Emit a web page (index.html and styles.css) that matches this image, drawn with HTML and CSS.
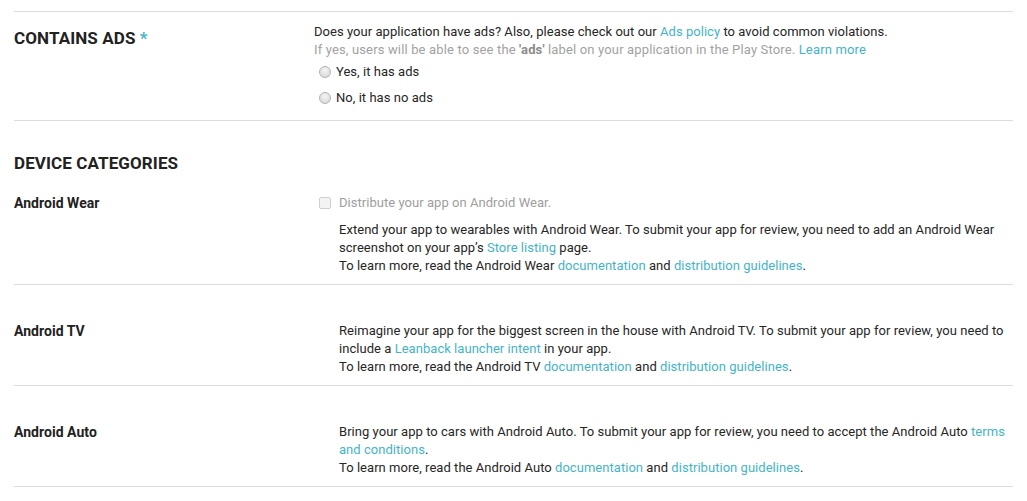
FILE: index.html
```html
<!DOCTYPE html>
<html>
<head>
<meta charset="utf-8">
<link rel="stylesheet" href="styles.css">
</head>
<body>
<div class="page">
  <section class="block ads">
    <div class="left">
      <h2 class="title">CONTAINS ADS <span class="req">*</span></h2>
    </div>
    <div class="right">
      <p class="line">Does your application have ads? Also, please check out our <a class="link">Ads policy</a> to avoid common violations.</p>
      <p class="line hint">If yes, users will be able to see the <b>'ads'</b> label on your application in the Play Store. <a class="link">Learn more</a></p>
      <label class="radio-row"><span class="radio"></span><span>Yes, it has ads</span></label>
      <label class="radio-row"><span class="radio"></span><span>No, it has no ads</span></label>
    </div>
  </section>

  <section class="block devices">
    <h2 class="title cat-title">DEVICE CATEGORIES</h2>
    <div class="device wear">
      <div class="left"><h3 class="dev-name">Android Wear</h3></div>
      <div class="right">
        <label class="check-row"><span class="check"></span><span>Distribute your app on Android Wear.</span></label>
        <div class="desc">
          <p class="line">Extend your app to wearables with Android Wear. To submit your app for review, you need to add an Android Wear screenshot on your app’s <a class="link">Store listing</a> page.</p>
          <p class="line">To learn more, read the Android Wear <a class="link">documentation</a> and <a class="link">distribution guidelines</a>.</p>
        </div>
      </div>
    </div>
  </section>

  <section class="block device plain">
    <div class="left"><h3 class="dev-name">Android TV</h3></div>
    <div class="right">
      <div class="desc">
        <p class="line">Reimagine your app for the biggest screen in the house with Android TV. To submit your app for review, you need to include a <a class="link">Leanback launcher intent</a> in your app.</p>
        <p class="line">To learn more, read the Android TV <a class="link">documentation</a> and <a class="link">distribution guidelines</a>.</p>
      </div>
    </div>
  </section>

  <section class="block device plain">
    <div class="left"><h3 class="dev-name">Android Auto</h3></div>
    <div class="right">
      <div class="desc">
        <p class="line">Bring your app to cars with Android Auto. To submit your app for review, you need to accept the Android Auto <a class="link">terms and conditions</a>.</p>
        <p class="line">To learn more, read the Android Auto <a class="link">documentation</a> and <a class="link">distribution guidelines</a>.</p>
      </div>
    </div>
  </section>
  <div class="block end"></div>
</div>
</body>
</html>
```

FILE: styles.css
```css
* { box-sizing: border-box; }
html, body { margin: 0; background: #fff; }
body {
  font-family: Roboto, "Liberation Sans", sans-serif;
  font-size: 13px;
  line-height: 18px;
  color: #262626;
  letter-spacing: 0.04px;
}
.page { padding: 11px 14px 0; }
.block { border-top: 1px solid #dcdcdc; }
.line { margin: 0; }
.link { color: #45b4c8; text-decoration: none; cursor: pointer; }
.hint { color: #a2a2a2; letter-spacing: 0.15px; }
.hint b { color: #8a8a8a; }

.ads {
  display: grid;
  grid-template-columns: 300px 1fr;
  padding: 11px 0 9px;
}
.title {
  margin: 0;
  font-size: 17px;
  font-weight: 700;
  line-height: 24px;
  color: #222;
  letter-spacing: 0.1px;
}
.ads .title { margin-top: 3px; }
.req { color: #45b4c8; }

.radio-row {
  display: flex;
  align-items: center;
  height: 26px;
  padding-left: 5px;
  gap: 5px;
}
.radio {
  width: 12px;
  height: 12px;
  border-radius: 50%;
  border: 1px solid #b4b4b4;
  background: radial-gradient(circle at 50% 35%, #f4f4f4 0%, #dedede 70%, #cfcfcf 100%);
  flex: none;
}

.devices { padding: 30px 0 9px; }
.device {
  display: grid;
  grid-template-columns: 300px 1fr;
}
.wear { margin-top: 19px; }
.plain { padding: 37px 0 9px; }
.dev-name {
  margin: 0;
  font-size: 14px;
  font-weight: 700;
  line-height: 18px;
  color: #222;
}
.check-row {
  display: flex;
  align-items: center;
  height: 18px;
  padding-left: 5px;
  gap: 8px;
  color: #9e9e9e;
}
.check {
  width: 12px;
  height: 12px;
  border: 1px solid #cfcfcf;
  border-radius: 2px;
  background: #f3f3f3;
  flex: none;
}
.desc { padding-left: 25px; }
.wear .desc { margin-top: 9px; }
.end { height: 15px; }
```
